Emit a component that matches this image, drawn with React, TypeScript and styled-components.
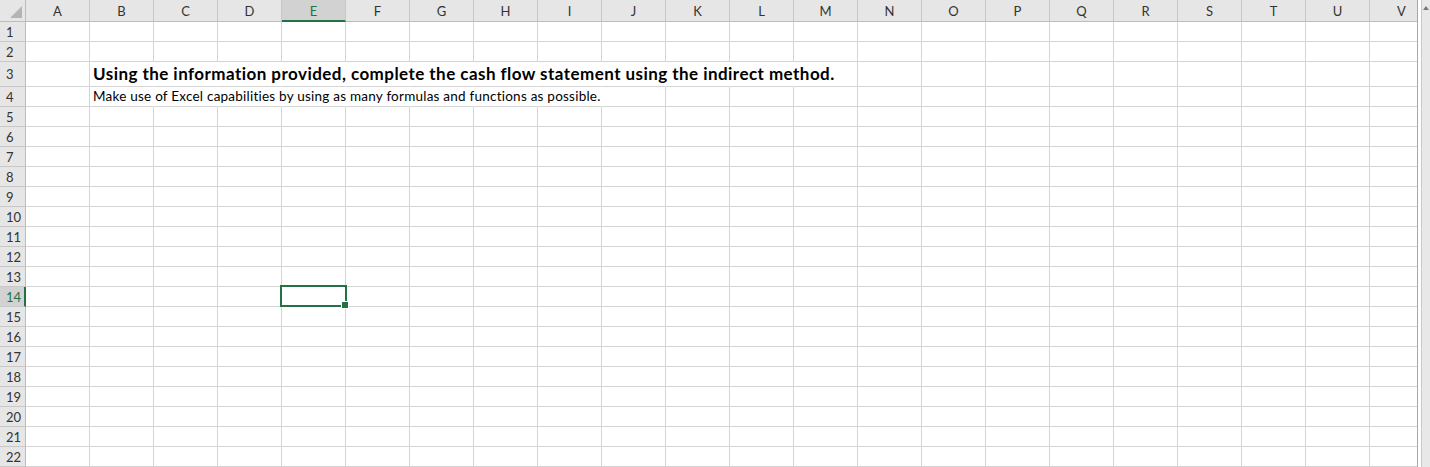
import React from 'react'
import styled, { createGlobalStyle } from 'styled-components'

const GlobalStyle = createGlobalStyle`
  html, body {
    margin: 0;
    padding: 0;
    background: #ffffff;
    overflow: hidden;
  }
  body {
    font-family: Lato, "Liberation Sans", sans-serif;
  }
`

const colors = {
  header: '#e6e6e6',
  headerSelected: '#d2d2d2',
  headerLine: '#bcbcbc',
  headerSep: '#c8c8c8',
  grid: '#d4d4d4',
  green: '#217346',
  text: '#222222',
}

const COLUMNS = 'ABCDEFGHIJKLMNOPQRSTUV'.split('')
const ROWS = Array.from({ length: 22 }, (_, i) => i + 1)
const SELECTED_COL = 'E'
const SELECTED_ROW = 14

const Window = styled.div`
  display: flex;
  width: 1430px;
  height: 467px;
  overflow: hidden;
  background: #ffffff;
`

const Sheet = styled.div`
  width: 1418px;
  height: 467px;
  overflow: hidden;
  border-right: 1px solid #a8a8a8;
  box-sizing: border-box;
`

const Grid = styled.div`
  display: grid;
  grid-template-columns: 26px repeat(${COLUMNS.length}, 64px);
  grid-template-rows: 22px 20px 20px 25px repeat(19, 20px);
`

const Corner = styled.div`
  position: relative;
  background: ${colors.header};
  border-right: 1px solid ${colors.headerLine};
  border-bottom: 1px solid ${colors.headerLine};
  box-sizing: border-box;
`

const CornerTriangle = styled.div`
  position: absolute;
  right: 3px;
  bottom: 3px;
  width: 0;
  height: 0;
  border-left: 12px solid transparent;
  border-bottom: 12px solid #b4b4b4;
`

const ColHeader = styled.div<{ $selected?: boolean }>`
  display: flex;
  align-items: center;
  justify-content: center;
  padding-top: 1px;
  box-sizing: border-box;
  font-size: 13px;
  color: ${(p) => (p.$selected ? colors.green : '#333333')};
  background: ${(p) => (p.$selected ? colors.headerSelected : colors.header)};
  border-right: 1px solid ${colors.headerSep};
  border-bottom: ${(p) => (p.$selected ? `2px solid ${colors.green}` : `1px solid ${colors.headerLine}`)};
`

const RowHeader = styled.div<{ $selected?: boolean }>`
  display: flex;
  align-items: center;
  justify-content: flex-start;
  padding-left: 6px;
  box-sizing: border-box;
  font-size: 13px;
  color: ${(p) => (p.$selected ? colors.green : '#333333')};
  background: ${(p) => (p.$selected ? colors.headerSelected : colors.header)};
  border-bottom: 1px solid ${colors.headerSep};
  border-right: ${(p) => (p.$selected ? `2px solid ${colors.green}` : `1px solid ${colors.headerLine}`)};
`

const Cell = styled.div<{ $spill?: boolean }>`
  position: relative;
  display: flex;
  align-items: flex-end;
  box-sizing: border-box;
  padding: 0 0 2px 3px;
  white-space: nowrap;
  overflow: visible;
  color: ${colors.text};
  border-bottom: 1px solid ${colors.grid};
  border-right: 1px solid ${(p) => (p.$spill ? 'transparent' : colors.grid)};
`

const Title = styled.span`
  font-size: 17px;
  font-weight: 700;
  letter-spacing: 0.45px;
  color: #000000;
  position: relative;
  z-index: 1;
`

const Note = styled.span`
  font-size: 13.5px;
  letter-spacing: 0.23px;
  color: #000000;
  position: relative;
  z-index: 1;
`

const Selection = styled.div`
  position: absolute;
  left: -2px;
  top: -2px;
  right: -2px;
  bottom: -1px;
  border: 2px solid ${colors.green};
  z-index: 2;
  pointer-events: none;
`

const FillHandle = styled.div`
  position: absolute;
  right: -4px;
  bottom: -4px;
  width: 6px;
  height: 6px;
  background: ${colors.green};
  border: 1px solid #ffffff;
`

const Scrollbar = styled.div`
  flex: 1;
  display: flex;
  flex-direction: column;
  padding-left: 3px;
  background: #ffffff;
`

const ScrollTrack = styled.div`
  flex: 1;
  position: relative;
  background: #e8e8e8;
  border-left: 1px solid #c8c8c8;
`

const ScrollArrow = styled.div`
  position: absolute;
  top: 6px;
  left: 1px;
  width: 0;
  height: 0;
  border-left: 3px solid transparent;
  border-right: 3px solid transparent;
  border-bottom: 4px solid #777777;
`

const spillRow: Record<number, string[]> = {
  3: 'BCDEFGHIJKL'.split(''),
  4: 'BCDEFGHI'.split(''),
}

const content: Record<string, React.ReactNode> = {
  B3: <Title>Using the information provided, complete the cash flow statement using the indirect method.</Title>,
  B4: <Note>Make use of Excel capabilities by using as many formulas and functions as possible.</Note>,
}

const App: React.FC = () => {
  return (
    <Window>
      <GlobalStyle />
      <Sheet>
        <Grid>
          <Corner>
            <CornerTriangle />
          </Corner>
          {COLUMNS.map((c) => (
            <ColHeader key={c} $selected={c === SELECTED_COL}>
              {c}
            </ColHeader>
          ))}
          {ROWS.map((r) => (
            <React.Fragment key={r}>
              <RowHeader $selected={r === SELECTED_ROW}>{r}</RowHeader>
              {COLUMNS.map((c) => {
                const id = `${c}${r}`
                const spill = (spillRow[r] || []).includes(c)
                return (
                  <Cell key={id} $spill={spill}>
                    {content[id]}
                    {c === SELECTED_COL && r === SELECTED_ROW && (
                      <Selection>
                        <FillHandle />
                      </Selection>
                    )}
                  </Cell>
                )
              })}
            </React.Fragment>
          ))}
        </Grid>
      </Sheet>
      <Scrollbar>
        <ScrollTrack>
          <ScrollArrow />
        </ScrollTrack>
      </Scrollbar>
    </Window>
  )
}

export default App
